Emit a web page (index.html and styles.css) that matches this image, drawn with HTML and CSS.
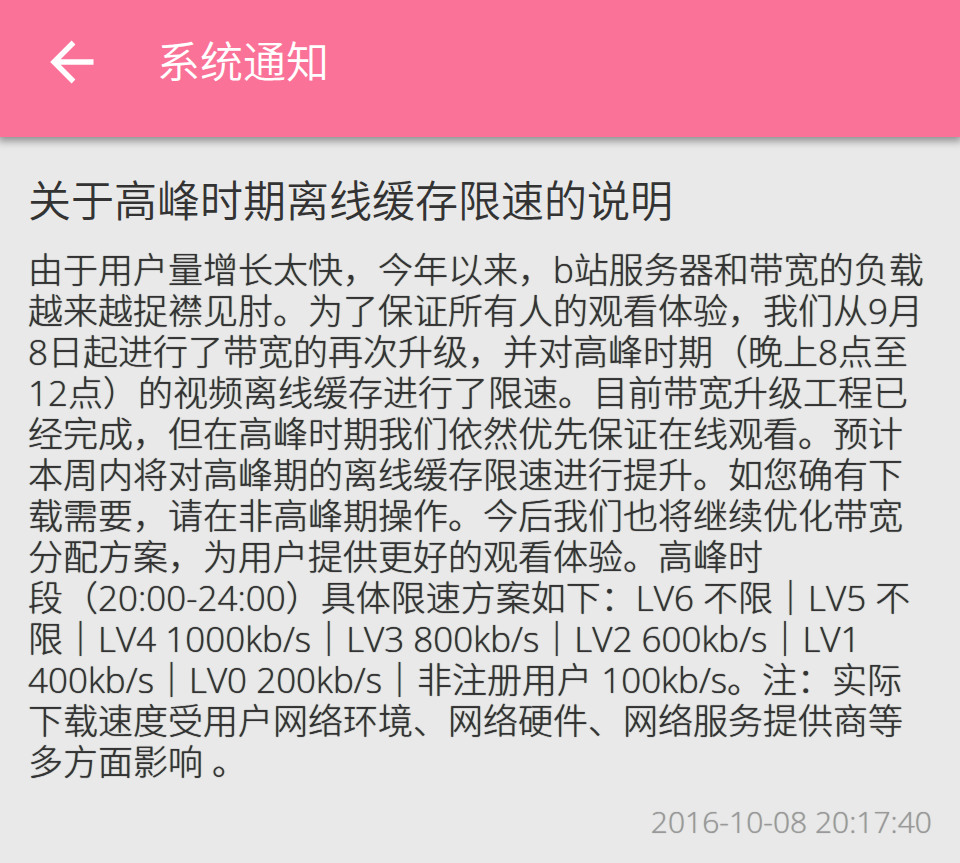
FILE: index.html
```html
<!DOCTYPE html>
<html lang="zh-CN">
<head>
<meta charset="utf-8">
<meta name="viewport" content="width=device-width, initial-scale=1">
<title>系统通知</title>
<link rel="stylesheet" href="styles.css">
</head>
<body>
<header class="app-bar">
  <button class="back" type="button" aria-label="返回">
    <svg viewBox="0 0 44 44" width="44" height="44" aria-hidden="true"><path d="M23.5 2.500 4 22 23.500 41.500M5 22H43.500" fill="none" stroke="#fff" stroke-width="5.400"/></svg>
  </button>
  <h1 class="app-title">系统通知</h1>
</header>
<main class="notice">
  <h2 class="notice-title">关于高峰时期离线缓存限速的说明</h2>
  <p class="notice-body">由于用户量增长太快，今年以来，b站服务器和带宽的负载<br>越来越捉襟见肘。为了保证所有人的观看体验，我们从9月<br>8日起进行了带宽的再次升级，并对高峰时期（晚上8点至<br>12点）的视频离线缓存进行了限速。目前带宽升级工程已<br>经完成，但在高峰时期我们依然优先保证在线观看。预计<br>本周内将对高峰期的离线缓存限速进行提升。如您确有下<br>载需要，请在非高峰期操作。今后我们也将继续优化带宽<br>分配方案，为用户提供更好的观看体验。高峰时<br>段（20:00-24:00）具体限速方案如下：LV6 不限｜LV5 不<br>限｜LV4 1000kb/s｜LV3 800kb/s｜LV2 600kb/s｜LV1<br>400kb/s｜LV0 200kb/s｜非注册用户 100kb/s。注：实际<br>下载速度受用户网络环境、网络硬件、网络服务提供商等<br>多方面影响 。</p>
  <time class="notice-time" datetime="2016-10-08T20:17:40">2016-10-08 20:17:40</time>
</main>
</body>
</html>
```
FILE: styles.css
```css
* {
  box-sizing: border-box;
}

body {
  margin: 0;
  min-height: 100vh;
  background: #e9e9e9;
  color: #333;
  font-family: "Open Sans", "Noto Sans CJK SC", sans-serif;
  font-weight: 350;
}

.app-bar {
  display: flex;
  align-items: center;
  gap: 63px;
  padding: 30px 50px 43px;
  background: #fb7299;
  box-shadow: 0 2px 8px 2px rgba(0, 0, 0, 0.4);
  color: #fff;
}

.back {
  display: flex;
  padding: 0;
  border: 0;
  background: none;
}

.app-title {
  margin: 0;
  font-size: 43px;
  font-weight: inherit;
  line-height: 64px;
}

.notice {
  padding: 32px 28px 16px;
}

.notice-title {
  margin: 0 0 16px;
  font-size: 43px;
  font-weight: inherit;
  line-height: 64px;
}

.notice-body {
  margin: 0;
  font-size: 35px;
  font-weight: 300;
  line-height: 41px;
  text-shadow: 0 0 1px currentColor;
  white-space: nowrap;
}

.notice-time {
  display: block;
  margin-top: 20px;
  color: #999;
  font-size: 30px;
  line-height: 40px;
  text-align: right;
  text-shadow: 0 0 1px currentColor;
}
```
